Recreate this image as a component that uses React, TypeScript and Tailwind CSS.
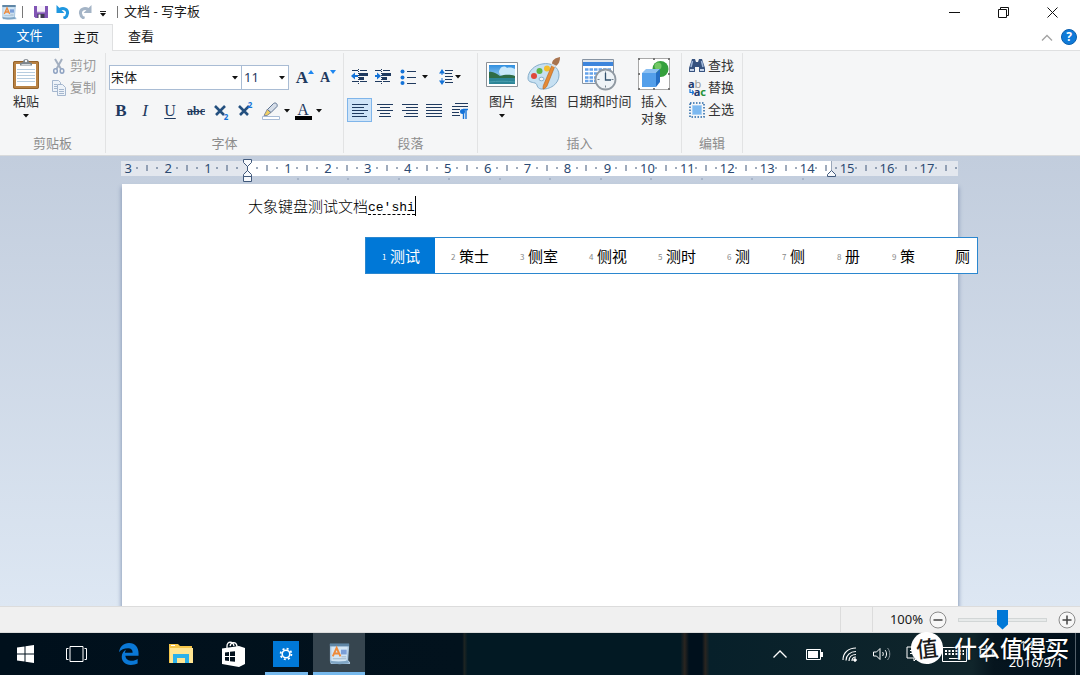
import React from 'react';

const Caret = () => (
  <svg width="6" height="4" viewBox="0 0 6 4" className="shrink-0" aria-hidden="true">
    <path d="M0 0h6L3 3.500z" fill="#111" />
  </svg>
);

const WordPadIcon = ({ size }: { size: number }) => (
  <svg width={size} height={size} viewBox="0 0 24 24" aria-hidden="true">
    <path d="M2 2h20v4l-1 13 2 2v2H3l-1-3z" fill="#a9c6df" />
    <path d="M2 1.500h20v3H2z" fill="#5f86a6" />
    <path d="M3.500 5h17L19.500 20h-16z" fill="#d3e6f5" />
    <path d="M2 19c5 2 13 2 18 0l2 3c-6 1.500-14 1.500-19 0z" fill="#7fa5c4" />
    <path d="M5 15 9 6l4 9M6.500 12h5" fill="none" stroke="#ee8a3a" strokeWidth="2" />
    <path d="M13.500 8h6v5h-6z" fill="#7b9fd8" />
    <path d="M5 17.500h14M14 15.500h5" stroke="#9db4c8" />
  </svg>
);

const SaveIcon = () => (
  <svg width="14" height="14" viewBox="0 0 14 14" aria-hidden="true">
    <path d="M0 1h14v12H1.500L0 11.500z" fill="#8155b5" />
    <path d="M3 1h8v6H3z" fill="#f6f2fa" />
    <path d="M3 7h8" stroke="#c8b6dd" />
    <path d="M3.500 9h7v4h-7z" fill="#3f3b52" />
    <path d="M4.500 9.500h2V13h-2z" fill="#fff" />
  </svg>
);

const UndoIcon = ({ color, flip }: { color: string; flip?: boolean }) => (
  <svg width="14" height="14" viewBox="0 0 14 14" className={flip ? '-scale-x-100' : ''} aria-hidden="true">
    <path d="M3.500 4.500c4-2 8.500-.500 8 4-.2 2.500-1.500 4-4 4.800" fill="none" stroke={color} strokeWidth="3" />
    <path d="M.5 0v8h8z" fill={color} />
  </svg>
);

const PasteIcon = () => (
  <svg width="28" height="32" viewBox="0 0 28 32" aria-hidden="true">
    <rect x="1" y="3" width="26" height="28" rx="2" fill="#b98243" />
    <rect x="1.500" y="3.500" width="25" height="27" rx="1.500" fill="none" stroke="#94632c" />
    <path d="M4 6h20v22H4z" fill="#fff" />
    <path d="M5 11.500h18M5 14.500h18M5 17.500h18M5 20.500h18M5 23.500h18" stroke="#b7cde0" />
    <path d="M8 7.500V5l3-1c0-4 6-4 6 0l3 1v2.500z" fill="#7d858c" />
    <path d="M9.500 6.500h9" stroke="#d5dade" />
    <circle cx="14" cy="3" r="1.200" fill="#f5f6f7" />
  </svg>
);

const CutIcon = () => (
  <svg width="14" height="16" viewBox="0 0 14 16" fill="none" aria-hidden="true">
    <path d="M3 1l6 10M10 1 4.500 11" stroke="#a3afc0" strokeWidth="2" />
    <ellipse cx="3.500" cy="13" rx="1.800" ry="2.200" stroke="#8fa3c2" strokeWidth="1.500" />
    <ellipse cx="10" cy="13" rx="1.800" ry="2.200" stroke="#8fa3c2" strokeWidth="1.500" />
  </svg>
);

const CopyIcon = () => (
  <svg width="14" height="16" viewBox="0 0 14 16" fill="#eef3f9" stroke="#a5b7ce" aria-hidden="true">
    <path d="M.5.500h6l2 2v9h-8z" />
    <path d="M2 4.500h3M2 6.500h3M2 8.500h3" />
    <path d="M5.500 4.500h5l3 3v8h-8z" />
    <path d="M7 9.500h5M7 11.500h5M7 13.500h5" />
  </svg>
);

const HighlightIcon = () => (
  <svg width="18" height="18" viewBox="0 0 18 18" aria-hidden="true">
    <path d="M.5 14.500h17v3H.5z" fill="#fff" stroke="#a9bcd6" />
    <path d="M2 13.500 5.500 7l3.500 3.500-4 3z" fill="#f0cf62" stroke="#8a8f98" />
    <path d="m5.500 7.500 6-6c2-1.500 4.500.5 3.500 3l-6 6z" fill="#d5dde8" stroke="#5d7391" />
  </svg>
);

const navy = '#1f3a5f';
const blue = '#1473d8';

const IndentIcon = ({ right }: { right?: boolean }) => (
  <svg width="18" height="16" viewBox="0 0 18 16" aria-hidden="true">
    <path d="M1 1.500h6M1 12.500h6M9 1.500h7M9 12.500h7" stroke={navy} />
    <path d="M8 4h9v3H8zM8 8h5v3H8z" fill={navy} />
    <path d="M7.500 0v16" stroke={navy} strokeDasharray="1 1" />
    <path d={right ? 'M1 7h4' : 'M3 7h4'} stroke={blue} strokeWidth="2" />
    <path d={right ? 'M3 3.500 7 7l-4 3.500z' : 'M4 3.500 0 7l4 3.500z'} fill={blue} />
  </svg>
);

const ListIcon = () => (
  <svg width="18" height="16" viewBox="0 0 18 16" aria-hidden="true">
    <path d="M7 2.500h9M7 8.500h9M7 14.500h9" stroke={navy} />
    <circle cx="2.500" cy="2.500" r="2" fill={blue} />
    <circle cx="2.500" cy="8.500" r="2" fill={blue} />
    <circle cx="2.500" cy="14" r="2" fill={blue} />
  </svg>
);

const SpacingIcon = () => (
  <svg width="14" height="18" viewBox="0 0 14 18" aria-hidden="true">
    <path d="M6 2.500h8M6 5.500h7M6 8.500h8M6 11.500h7M6 14.500h8" stroke={navy} />
    <path d="M3 3v11" stroke={blue} strokeDasharray="4 3" />
    <path d="M0 5.500 3 1l3 4.500zM0 12.500h6L3 17z" fill={blue} />
  </svg>
);

const alignPaths = {
  left: 'M1 1.500h16M1 4.500h12M1 7.500h16M1 10.500h12M1 13.500h15',
  center: 'M1 1.500h16M4 4.500h10M1 7.500h16M4 10.500h10M3 13.500h12',
  right: 'M1 1.500h16M5 4.500h12M1 7.500h16M5 10.500h12M3 13.500h14',
  justify: 'M1 1.500h16M1 4.500h16M1 7.500h16M1 10.500h16M1 13.500h16',
};

const AlignIcon = ({ type }: { type: keyof typeof alignPaths }) => (
  <svg width="18" height="15" viewBox="0 0 18 15" aria-hidden="true">
    <path d={alignPaths[type]} stroke={navy} strokeWidth="1.200" />
  </svg>
);

const ParagraphIcon = () => (
  <svg width="17" height="17" viewBox="0 0 17 17" aria-hidden="true">
    <path d="M4 1.500h13M1 4.500h16M1 7.500h8M1 10.500h7M1 13.500h8" stroke={navy} strokeWidth="1.200" />
    <path d="M17 7.500h-5M12.500 8v9M15 8v9" fill="none" stroke={blue} strokeWidth="1.400" />
    <circle cx="11.500" cy="9.500" r="2.500" fill={blue} />
  </svg>
);

const PictureIcon = () => (
  <svg width="32" height="32" viewBox="0 0 32 32" aria-hidden="true">
    <defs>
      <linearGradient id="sky" x1="0" y1="0" x2="0" y2="1">
        <stop offset="0" stopColor="#2f8fe0" />
        <stop offset="1" stopColor="#d9f0fb" />
      </linearGradient>
    </defs>
    <path d="M.5 4.500h31v24H.5z" fill="#fff" stroke="#8b9197" />
    <path d="M3 7h26v19H3z" fill="url(#sky)" />
    <path d="M14 11c2-3 5-3 7-1 3-1 6 0 8 1v7H16c-3-2-4-4-2-7z" fill="#c9e8fa" />
    <path d="M3 14c4-1 8 2 11 4 4-1 9-2 15 0v3H3z" fill="#2f6c47" />
    <path d="M3 20h26v6H3z" fill="#2c8496" />
    <path d="M3 24c9-1 17-1 26 0" fill="none" stroke="#4b9fae" />
  </svg>
);

const PaintIcon = () => (
  <svg width="34" height="34" viewBox="0 0 34 34" aria-hidden="true">
    <path d="M15 7c9-2 17 3 17 11 0 9-9 15-18 14-5-1-3-5-6-6-4-1-7-1-7-5C1 14 8 8 15 7z" fill="#c6e0f2" stroke="#86aecb" />
    <ellipse cx="14.500" cy="22" rx="2.500" ry="1.800" fill="#f5f6f7" stroke="#86aecb" />
    <circle cx="7" cy="19" r="3" fill="#e0473b" />
    <circle cx="12.500" cy="14" r="3" fill="#5fb548" />
    <circle cx="20" cy="11.500" r="3" fill="#f4bd2c" />
    <path d="m28 9-8 20c-1 2-3 3-4 3 0-2 0-3 1-5l8-19z" fill="#e58a35" stroke="#b4621c" strokeWidth=".6" />
    <path d="M25 7c0-4 3-6 8-7 0 4-1 7-4 9z" fill="#a8744f" />
    <path d="m24.500 7.500 4 2" stroke="#d9dde2" strokeWidth="2" />
  </svg>
);

const CalendarIcon = () => (
  <svg width="36" height="34" viewBox="0 0 36 34" aria-hidden="true">
    <path d="M1.500 2.500h31v24h-31z" fill="#fff" stroke="#8794a3" />
    <path d="M2 3h30v2H2z" fill="#dfe5ec" />
    <path d="M2 5h30v4H2z" fill="#3d85dc" />
    <path d="M4 12.500h26M4 16.500h26M4 20.500h20M4 24h14" stroke="#65a3ea" strokeWidth="2.600" strokeDasharray="3.500 1" />
    <circle cx="24.500" cy="22.500" r="10" fill="#eef3f7" stroke="#9099a2" strokeWidth="1.800" />
    <path d="M24.500 14.500v2M24.500 28.500v2M16.500 22.500h2M30.500 22.500h2" stroke="#74828f" />
    <path d="M24.500 16v7H30" fill="none" stroke="#33536f" strokeWidth="1.300" />
  </svg>
);

const ObjectIcon = () => (
  <svg width="34" height="34" viewBox="0 0 34 34" aria-hidden="true">
    <path d="M1.500 1.500h31v31h-31z" fill="#fff" stroke="#a9a9a9" />
    <path d="M1 1h2v2H1zM31 1h2v2h-2zM1 31h2v2H1zM31 31h2v2h-2zM16 1h2v2h-2zM16 31h2v2h-2zM1 16h2v2H1zM31 16h2v2h-2z" fill="#777" />
    <circle cx="23.500" cy="12" r="8" fill="#35a03c" />
    <circle cx="21" cy="9" r="3.500" fill="#73c866" />
    <path d="m5 16 4-4h14l-4 4z" fill="#8cc0f2" />
    <path d="M5 16h14v14H5z" fill="#539fea" />
    <path d="m19 16 4-4v13l-4 5z" fill="#256fc4" />
  </svg>
);

const FindIcon = () => (
  <svg width="18" height="16" viewBox="0 0 18 16" aria-hidden="true">
    <path d="M4 1h3l1 3h2l1-3h3l3 9v4h-6V9H7v5H1v-4z" fill="#36527f" />
    <path d="M4.500 3 3 9M13.500 3 15 9" stroke="#9db5d8" strokeWidth="1.500" />
    <path d="M1.500 10.500h5v3h-5zM11.500 10.500h5v3h-5z" fill="#c5d4ea" stroke="#36527f" />
  </svg>
);

const ReplaceIcon = () => (
  <span className="flex w-[18px] flex-col font-['Noto_Sans',sans-serif] text-[11px] font-bold leading-[8px]" aria-hidden="true">
    <span className="text-left text-[#1f3a6f]">a<span className="font-normal text-[#9a9a9a]">b</span></span>
    <span className="flex items-center justify-end text-[#1f3a6f]">
      <svg width="5" height="6" viewBox="0 0 5 6"><path d="M1 0v3.500h3M3 1.500l2 2-2 2" fill="none" stroke="#1473d8" strokeWidth="1.200" /></svg>
      a<span className="text-[#26923a]">c</span>
    </span>
  </span>
);

const SelectAllIcon = () => (
  <svg width="16" height="16" viewBox="0 0 16 16" aria-hidden="true">
    <path d="M1 1h14v14H1z" fill="none" stroke="#2567a8" strokeWidth="1.500" strokeDasharray="1.500 1.500" />
    <path d="M3.500 3.500h9v9h-9z" fill="#7db9f0" stroke="#a9d1f5" />
  </svg>
);

const Group = ({ label, className, children }: { label: string; className: string; children?: React.ReactNode }) => (
  <section aria-label={label} className={`my-[2px] flex flex-col border-r border-[#e2e3e4] ${className}`}>
    <div className="flex-1">{children}</div>
    <div className="h-[19px] text-center leading-[19px] text-[#8c8c8c]">{label}</div>
  </section>
);

const Tool = ({ label, className, children }: { label: string; className: string; children?: React.ReactNode }) => (
  <button type="button" aria-label={label} className={`flex h-6 items-center justify-center ${className}`}>
    {children}
  </button>
);

const BigTool = ({ label, className, children }: { label: React.ReactNode; className: string; children?: React.ReactNode }) => (
  <button type="button" className={`flex flex-col items-center ${className}`}>
    <span className="flex h-[38px] items-center">{children}</span>
    <span className="leading-[17px]">{label}</span>
  </button>
);

const Ribbon = () => (
  <div className="flex h-[105px] border-b border-[#d8dadc] bg-[#f5f6f7] text-[13px] text-[#333]">
    <Group label="剪贴板" className="w-[106px]">
      <div className="flex pt-[2px]">
        <BigTool className="ml-1 w-11" label={<>粘贴<span className="mt-1 flex justify-center"><Caret /></span></>}>
          <PasteIcon />
        </BigTool>
        <div className="ml-1 flex flex-col text-[#9a9a9a]">
          <button type="button" className="flex h-[22px] items-center gap-1"><CutIcon />剪切</button>
          <button type="button" className="flex h-[22px] items-center gap-1"><CopyIcon />复制</button>
        </div>
      </div>
    </Group>

    <Group label="字体" className="w-[238px]">
      <div className="flex items-center pl-[3px] pt-3">
        <div className="relative">
          <select aria-label="字体系列" defaultValue="宋体" className="h-[25px] w-[133px] appearance-none border border-[#a9bcd4] bg-white pl-px text-[#1a1a1a]">
            <option>宋体</option>
          </select>
          <span className="pointer-events-none absolute right-1 top-[11px]"><Caret /></span>
        </div>
        <div className="relative -ml-px">
          <select aria-label="字号" defaultValue="11" className="h-[25px] w-12 appearance-none border border-[#a9bcd4] bg-white pl-0.5 text-[#1f3a5f]">
            <option>11</option>
          </select>
          <span className="pointer-events-none absolute right-1 top-[11px]"><Caret /></span>
        </div>
        <Tool label="增大字体" className="ml-1 w-6 font-['Liberation_Serif',serif] text-[17px] font-bold text-[#1f3a5f]">
          A<svg width="6" height="4" viewBox="0 0 6 4" className="mb-3"><path d="M3 0l3 4H0z" fill="#1e87f0" /></svg>
        </Tool>
        <Tool label="缩小字体" className="w-[22px] font-['Liberation_Serif',serif] text-[14px] font-bold text-[#1f3a5f]">
          A<svg width="6" height="4" viewBox="0 0 6 4" className="mb-3"><path d="M0 0h6L3 4z" fill="#1e87f0" /></svg>
        </Tool>
      </div>
      <div className="flex items-center pl-[3px] pt-[9px] font-['Liberation_Serif',serif] text-[#1f3a5f]">
        <Tool label="加粗" className="w-6 text-[17px] font-bold">B</Tool>
        <Tool label="倾斜" className="w-6 text-[17px] italic">I</Tool>
        <Tool label="下划线" className="w-[26px] text-[16px] underline underline-offset-2">U</Tool>
        <Tool label="删除线" className="w-[26px] text-[12px] font-bold line-through">abc</Tool>
        <Tool label="下标" className="w-6">
          <svg width="16" height="16" viewBox="0 0 16 16"><path d="m1 3 9 9M11 3l-9 9" stroke="#24507f" strokeWidth="2.600" /></svg>
          <span className="-ml-1.5 mt-3 font-['Noto_Sans',sans-serif] text-[8px] font-bold text-[#1473d8]">2</span>
        </Tool>
        <Tool label="上标" className="w-6">
          <svg width="16" height="16" viewBox="0 0 16 16"><path d="m1 3 9 9M11 3l-9 9" stroke="#24507f" strokeWidth="2.600" /></svg>
          <span className="-ml-1.5 mb-3 font-['Noto_Sans',sans-serif] text-[8px] font-bold text-[#1473d8]">2</span>
        </Tool>
        <Tool label="文本突出显示颜色" className="ml-[3px] w-8 gap-1"><HighlightIcon /><Caret /></Tool>
        <Tool label="文本颜色" className="w-8 gap-1">
          <span className="flex w-[17px] flex-col items-center border-b-4 border-black text-[16px] leading-[13px]">A</span>
          <Caret />
        </Tool>
      </div>
    </Group>

    <Group label="段落" className="w-[134px]">
      <div className="flex items-center pl-1 pt-3">
        <Tool label="减少缩进" className="w-6"><IndentIcon /></Tool>
        <Tool label="增加缩进" className="w-[22px]"><IndentIcon right /></Tool>
        <Tool label="项目符号" className="ml-0.5 w-9 gap-1"><ListIcon /><Caret /></Tool>
        <Tool label="行距" className="ml-0.5 w-8 gap-0.5"><SpacingIcon /><Caret /></Tool>
      </div>
      <div className="flex items-center pl-[3px] pt-[9px]">
        <button type="button" aria-label="左对齐" aria-pressed="true" className="flex h-6 w-[25px] items-center justify-center border border-[#7fb5ea] bg-[#cfe4f8]">
          <AlignIcon type="left" />
        </button>
        <Tool label="居中" className="w-[25px]"><AlignIcon type="center" /></Tool>
        <Tool label="右对齐" className="w-[25px]"><AlignIcon type="right" /></Tool>
        <Tool label="两端对齐" className="w-6"><AlignIcon type="justify" /></Tool>
        <Tool label="段落" className="w-[26px]"><ParagraphIcon /></Tool>
      </div>
    </Group>

    <Group label="插入" className="w-[204px]">
      <div className="flex items-start pt-[2px]">
        <BigTool className="ml-[3px] w-[42px]" label={<>图片<span className="mt-1 flex justify-center"><Caret /></span></>}><PictureIcon /></BigTool>
        <BigTool className="w-[42px]" label="绘图"><PaintIcon /></BigTool>
        <BigTool className="w-[68px] whitespace-nowrap" label="日期和时间"><CalendarIcon /></BigTool>
        <BigTool className="w-[42px]" label={<>插入<br />对象</>}><ObjectIcon /></BigTool>
      </div>
    </Group>

    <Group label="编辑" className="w-[61px]">
      <div className="flex flex-col pl-[6px] pt-[2px]">
        <button type="button" className="flex h-[22px] items-center gap-0.5"><span className="flex w-[18px] justify-center"><FindIcon /></span>查找</button>
        <button type="button" className="flex h-[22px] items-center gap-0.5"><ReplaceIcon />替换</button>
        <button type="button" className="flex h-[22px] items-center gap-0.5"><span className="flex w-[18px] justify-center"><SelectAllIcon /></span>全选</button>
      </div>
    </Group>
  </div>
);

const ORIGIN = 126;
const CM = 39.94;

const Ruler = () => {
  const numbers = Array.from({ length: 21 }, (_, i) => i - 3).filter((n) => n !== 0);
  const ticks = Array.from({ length: 84 }, (_, i) => i - 12).filter((q) => q % 4 !== 0);
  const stops = Array.from({ length: 11 }, (_, i) => i + 1);

  return (
    <svg width="838" height="28" viewBox="0 0 838 28" className="block" role="img" aria-label="标尺">
      <path d="M0 5h837v15H0z" fill="#e3e7ee" />
      <path d="M126 5h584v15H126z" fill="#fff" />
      {ticks.map((q) => {
        const x = Math.round(ORIGIN + (q * CM) / 4);
        const half = q % 2 === 0;
        return <path key={q} d={half ? `M${x} 9v6` : `M${x} 11v2`} stroke="#41597b" />;
      })}
      {numbers.filter((n) => n < 18).map((n) => (
        <text key={n} x={ORIGIN + n * CM + 1} y="17" textAnchor="middle" fontSize="13" fill="#2c4a72" fontFamily="Noto Sans, sans-serif">
          {Math.abs(n)}
        </text>
      ))}
      {stops.map((s) => (
        <path key={s} d={`M${Math.round(ORIGIN + s * 50.5)} 22v2`} stroke="#8c9bb3" />
      ))}
      <g fill="#f7f9fc" stroke="#41597b">
        <path d="M122.500 3.500h8v3l-4 4-4-4zM126.500 10v5M126.500 14.500l4 4v2h-8v-2zM122.500 20.500h8v5h-8z" />
        <path d="M710.500 5v10" stroke="#9aa7ba" />
        <path d="M710.500 14.500l4 4v2h-8v-2z" />
      </g>
    </svg>
  );
};

const candidates = ['测试', '策士', '侧室', '侧视', '测时', '测', '侧', '册', '策', '厕'];

const CandidateBar = () => (
  <div role="listbox" aria-label="候选词" className="absolute left-[243px] top-[53px] flex h-[37px] w-[613px] border border-[#2b87cf] bg-white font-['Noto_Sans_CJK_SC',sans-serif] text-[15px] leading-none text-black">
    {candidates.map((word, i) => {
      const last = i === candidates.length - 1;
      return (
        <button
          key={word}
          type="button"
          role="option"
          aria-selected={i === 0}
          className={`flex shrink-0 items-center pb-px ${last ? 'pl-6' : 'pl-4'} ${word.length > 1 ? 'w-[69px]' : last ? 'w-[46px]' : 'w-[55px]'} ${i === 0 ? 'bg-[#0078d7] text-white' : ''}`}
        >
          {!last && <span className={`mt-1 w-2 text-left text-[8px] ${i === 0 ? 'text-white' : 'text-[#888]'}`}>{i + 1}</span>}
          {word}
        </button>
      );
    })}
  </div>
);

const StatusBar = () => (
  <footer className="flex h-[27px] items-center justify-end border-y border-[#dcdcdc] bg-[#f0f0f0] text-[13px] text-[#1a1a1a]">
    <div className="h-full w-[33px] border-x border-[#dcdcdc]" />
    <label htmlFor="zoom" className="w-[50px] text-right">100%</label>
    <button type="button" aria-label="缩小" className="ml-[6px]">
      <svg width="18" height="18" viewBox="0 0 18 18"><circle cx="9" cy="9" r="8" fill="#f7f7f7" stroke="#8b8b8b" /><path d="M4.500 9h9" stroke="#444" strokeWidth="1.500" /></svg>
    </button>
    <input
      id="zoom"
      type="range"
      min="10"
      max="190"
      defaultValue="100"
      className="mx-[11px] h-5 w-[89px] appearance-none bg-transparent [&::-webkit-slider-runnable-track]:h-1 [&::-webkit-slider-runnable-track]:border [&::-webkit-slider-runnable-track]:border-[#d2d6d6] [&::-webkit-slider-runnable-track]:bg-[#e7eaea] [&::-webkit-slider-thumb]:-mt-[9px] [&::-webkit-slider-thumb]:h-5 [&::-webkit-slider-thumb]:w-[11px] [&::-webkit-slider-thumb]:appearance-none [&::-webkit-slider-thumb]:bg-[#0078d7] [&::-webkit-slider-thumb]:[clip-path:polygon(0_0,100%_0,100%_75%,50%_100%,0_75%)]"
    />
    <button type="button" aria-label="放大" className="mr-1">
      <svg width="18" height="18" viewBox="0 0 18 18"><circle cx="9" cy="9" r="8" fill="#f7f7f7" stroke="#8b8b8b" /><path d="M4.500 9h9M9 4.500v9" stroke="#444" strokeWidth="1.500" /></svg>
    </button>
  </footer>
);

const Taskbar = () => (
  <nav
    aria-label="任务栏"
    className="relative flex h-[42px] bg-[linear-gradient(90deg,#00101c_0%,#02121d_42.8%,#1d2422_43%,#021923_43.3%,#021923_63%,#2a2520_63.4%,#00101c_63.8%,#00101c_65%,#2a2520_65.3%,#07202a_65.7%,#10252b_90%,#06151e_92%,#00101c_100%)] text-white"
  >
    <button type="button" aria-label="开始" className="flex w-[50px] items-center justify-center">
      <svg width="17" height="18" viewBox="0 0 17 18" fill="#fff"><path d="M0 2.500 7.500 1.500v7H0zM8.500 1.300 17 0v8.500H8.500zM0 9.500h7.500v7L0 15.500zM8.500 9.500H17V18l-8.500-1.300z" /></svg>
    </button>
    <button type="button" aria-label="任务视图" className="flex w-[52px] items-center justify-center">
      <svg width="21" height="16" viewBox="0 0 21 16" fill="none" stroke="#fff"><path d="M4 .5h13v15H4zM2.500 2.500h-2v11h2M18.500 2.500h2v11h-2" /></svg>
    </button>
    <button type="button" aria-label="Microsoft Edge" className="flex w-[54px] items-center justify-center">
      <svg width="20" height="22" viewBox="0 0 22 24"><path d="M0 10C1 4 5 0 11 0c7 0 10.500 5 10.500 11v3H7c.3 4 3.500 5.500 7 5.500 2.500 0 4.500-.7 6.500-2v5c-2 1-4.500 1.500-7.500 1.500C6.500 24 3 20 3 15c0-3.500 2-6.500 5-8-1 1.200-1.300 2.500-1.500 3.500h8.500c0-3-1.500-4.800-5-4.800C5.500 5.700 2 7.500 0 10z" fill="#0a78d6" /></svg>
    </button>
    <button type="button" aria-label="文件资源管理器" className="flex w-[50px] items-center justify-center">
      <svg width="24" height="20" viewBox="0 0 24 20"><path d="M0 0h9l2 2h12v17H0z" fill="#f5c64a" /><path d="M1 4h23v15H1z" fill="#ffe592" /><path d="M4 19v-9h16v9h-4v-5H8v5z" fill="#2bb1ea" /><path d="M2 1.500h4" stroke="#fff" /></svg>
    </button>
    <button type="button" aria-label="应用商店" className="ml-px flex w-[52px] items-center justify-center">
      <svg width="23" height="26" viewBox="0 0 23 26"><path d="M0 7.500 17 5l6 2v16l-6 3L0 23z" fill="#fff" /><path d="M5 7V5c0-5 6-5 7 0M8 5c1-4 6-5 7 0v1" fill="none" stroke="#fff" strokeWidth="1.300" /><path d="M3 11.500l4-.500v4H3zM8 10.800l5-.6V15H8zM3 16h4v4l-4-.5zM8 16h5v4.800L8 20.200z" fill="#02111d" /></svg>
    </button>
    <button type="button" aria-label="设置" className="ml-px flex w-[52px] flex-col items-center">
      <span className="mt-2 flex h-[26px] w-[26px] items-center justify-center bg-[#0078d7]">
        <svg width="14" height="14" viewBox="0 0 14 14" fill="none" stroke="#fff"><circle cx="7" cy="7" r="3.800" strokeWidth="1.600" /><circle cx="7" cy="7" r="5.400" strokeWidth="1.800" strokeDasharray="2 2.240" /></svg>
      </span>
      <span className="mt-auto h-[3px] w-[43px] bg-[#76b9ed]" />
    </button>
    <button type="button" aria-label="写字板" className="ml-px flex w-[52px] flex-col items-center bg-[#36454f]">
      <span className="mt-[9px]"><WordPadIcon size={23} /></span>
      <span className="mt-auto h-[3px] w-full bg-[#76b9ed]" />
    </button>

    <div className="ml-auto flex items-center gap-[15px] pr-1">
      <button type="button" aria-label="显示隐藏的图标">
        <svg width="14" height="8" viewBox="0 0 14 8" fill="none" stroke="#fff" strokeWidth="1.300"><path d="M.5 7.500 7 1l6.500 6.500" /></svg>
      </button>
      <svg width="17" height="11" viewBox="0 0 17 11" className="ml-1" role="img" aria-label="电池"><path d="M.5.500h14v10H.5z" fill="none" stroke="#fff" /><path d="M2 2h10v7H2zM15 3h2v5h-2z" fill="#fff" /></svg>
      <svg width="16" height="16" viewBox="0 0 16 16" className="ml-1" fill="none" stroke="#fff" role="img" aria-label="无线网络"><path d="M1 14C1 7 6 2 14 2M4 14.500c0-5 4-9 10-9M7 15c0-4 3-6.500 7-6.500M10 15c0-2 1-4 4-4" strokeWidth="1.200" /><circle cx="13" cy="14" r="1.300" fill="#fff" /></svg>
      <svg width="18" height="14" viewBox="0 0 18 14" fill="none" stroke="#fff" role="img" aria-label="音量"><path d="M.5 5h3L7 1.500v11L3.500 9h-3zM9.500 5c1 1 1 3 0 4M12 3c2 2 2 6 0 8" /><path d="M14.500 1c3 3 3 9 0 12" stroke="#8b969c" /></svg>
      <svg width="17" height="16" viewBox="0 0 17 16" fill="none" stroke="#fff" role="img" aria-label="通知"><path d="M1 1h15v11h-5l-3 3v-3H1zM4 4.500h9M4 7.500h9" /></svg>
      <svg width="25" height="15" viewBox="0 0 25 15" fill="none" stroke="#fff" className="ml-1" role="img" aria-label="触摸键盘"><path d="M.5.500h24v14H.5zM7 11.500h11" /><path d="M3 4h19M3 7h19" strokeWidth="2" strokeDasharray="2 1.500" /></svg>
      <span className="-ml-1 w-[17px] text-[17px]">中</span>
      <time className="-ml-0.5 flex w-14 flex-col items-center text-[13px] leading-[17px]"><span>14:57</span><span>2016/9/1</span></time>
      <button type="button" aria-label="显示桌面" className="-ml-1 h-full w-px bg-[#53606a]" />
    </div>

    <div className="absolute -top-1 right-[11px] flex items-center gap-[11px] whitespace-nowrap">
      <span className="flex h-8 w-8 -rotate-6 items-center justify-center rounded-full bg-white text-[22px] font-medium leading-none text-[#1b1b1b]">值</span>
      <span className="text-[23px] font-medium leading-[38px] [text-shadow:0_0_2px_#000]">什么值得买</span>
    </div>
  </nav>
);

const App = () => {
  return (
    <div className="flex min-h-screen flex-col bg-white font-['Noto_Sans','Noto_Sans_CJK_SC',sans-serif] text-[13px] text-[#1a1a1a]">
      <header className="flex h-6 items-center">
        <span className="ml-px"><WordPadIcon size={16} /></span>
        <span className="ml-[5px] h-3 w-px bg-[#777]" />
        <button type="button" aria-label="保存" className="ml-[11px]"><SaveIcon /></button>
        <button type="button" aria-label="撤消" className="ml-2"><UndoIcon color="#1f97e0" /></button>
        <button type="button" aria-label="重做" className="ml-2"><UndoIcon color="#a4b4c6" flip /></button>
        <button type="button" aria-label="自定义快速访问工具栏" className="ml-2 flex flex-col gap-px pt-1">
          <span className="h-px w-1.5 bg-[#222]" />
          <Caret />
        </button>
        <span className="ml-[11px] h-3 w-px bg-[#777]" />
        <h1 className="ml-1.5">文档 - 写字板</h1>
        <div className="ml-auto flex pr-[3px]">
          <button type="button" aria-label="最小化" className="flex w-[49px] justify-center">
            <svg width="11" height="11" viewBox="0 0 11 11"><path d="M0 5.500h11" stroke="#111" /></svg>
          </button>
          <button type="button" aria-label="还原" className="flex w-[49px] justify-center">
            <svg width="11" height="11" viewBox="0 0 11 11" fill="none" stroke="#111"><path d="M.5 2.500h8v8h-8zM2.500 2V.500h8v8H9" /></svg>
          </button>
          <button type="button" aria-label="关闭" className="flex w-[49px] justify-center">
            <svg width="11" height="11" viewBox="0 0 11 11"><path d="m.5.500 10 10M10.500.500l-10 10" stroke="#111" /></svg>
          </button>
        </div>
      </header>

      <div className="flex h-[27px] items-start border-b border-[#dfe0e1]">
        <button type="button" className="h-6 w-[59px] bg-[#1979ca] text-white">文件</button>
        <button type="button" className="h-[27px] w-[54px] border-x border-t border-[#dfe0e1] bg-[#f5f6f7]">主页</button>
        <button type="button" className="h-[26px] w-14">查看</button>
        <div className="ml-auto flex h-[26px] items-center gap-2 pr-[3px]">
          <button type="button" aria-label="最小化功能区">
            <svg width="12" height="7" viewBox="0 0 12 7" fill="none" stroke="#a3a3a3" strokeWidth="1.300"><path d="m1 6.500 5-5 5 5" /></svg>
          </button>
          <button type="button" aria-label="帮助" className="flex h-4 w-4 items-center justify-center rounded-full border border-[#0a5fae] bg-[#0f7ad8] text-[12px] font-bold leading-none text-white">?</button>
        </div>
      </div>

      <Ribbon />

      <main className="flex flex-1 flex-col overflow-hidden bg-linear-to-b from-[#c2cddd] to-[#dde7f3]">
        <div className="mx-auto w-full max-w-[838px]">
          <Ruler />
        </div>
        <div className="relative mx-auto w-full max-w-[836px] flex-1 bg-white shadow-[0_4px_4px_1px_#8f9fbb]">
          <div
            role="textbox"
            aria-label="文档"
            aria-multiline="true"
            contentEditable
            suppressContentEditableWarning
            spellCheck={false}
            className="flex items-center pl-[126px] pt-3 font-['Noto_Sans_CJK_SC',sans-serif] text-[15px] font-light leading-5 text-black outline-none"
          >
            大象键盘测试文档
            <span className="border-b border-dashed border-black pt-1 font-['Liberation_Mono',monospace] text-[13px] font-normal leading-[13px]">ce'shi</span>
            <span className="h-5 w-px bg-black" />
          </div>
          <CandidateBar />
        </div>
      </main>

      <StatusBar />
      <Taskbar />
    </div>
  );
};

export default App;
